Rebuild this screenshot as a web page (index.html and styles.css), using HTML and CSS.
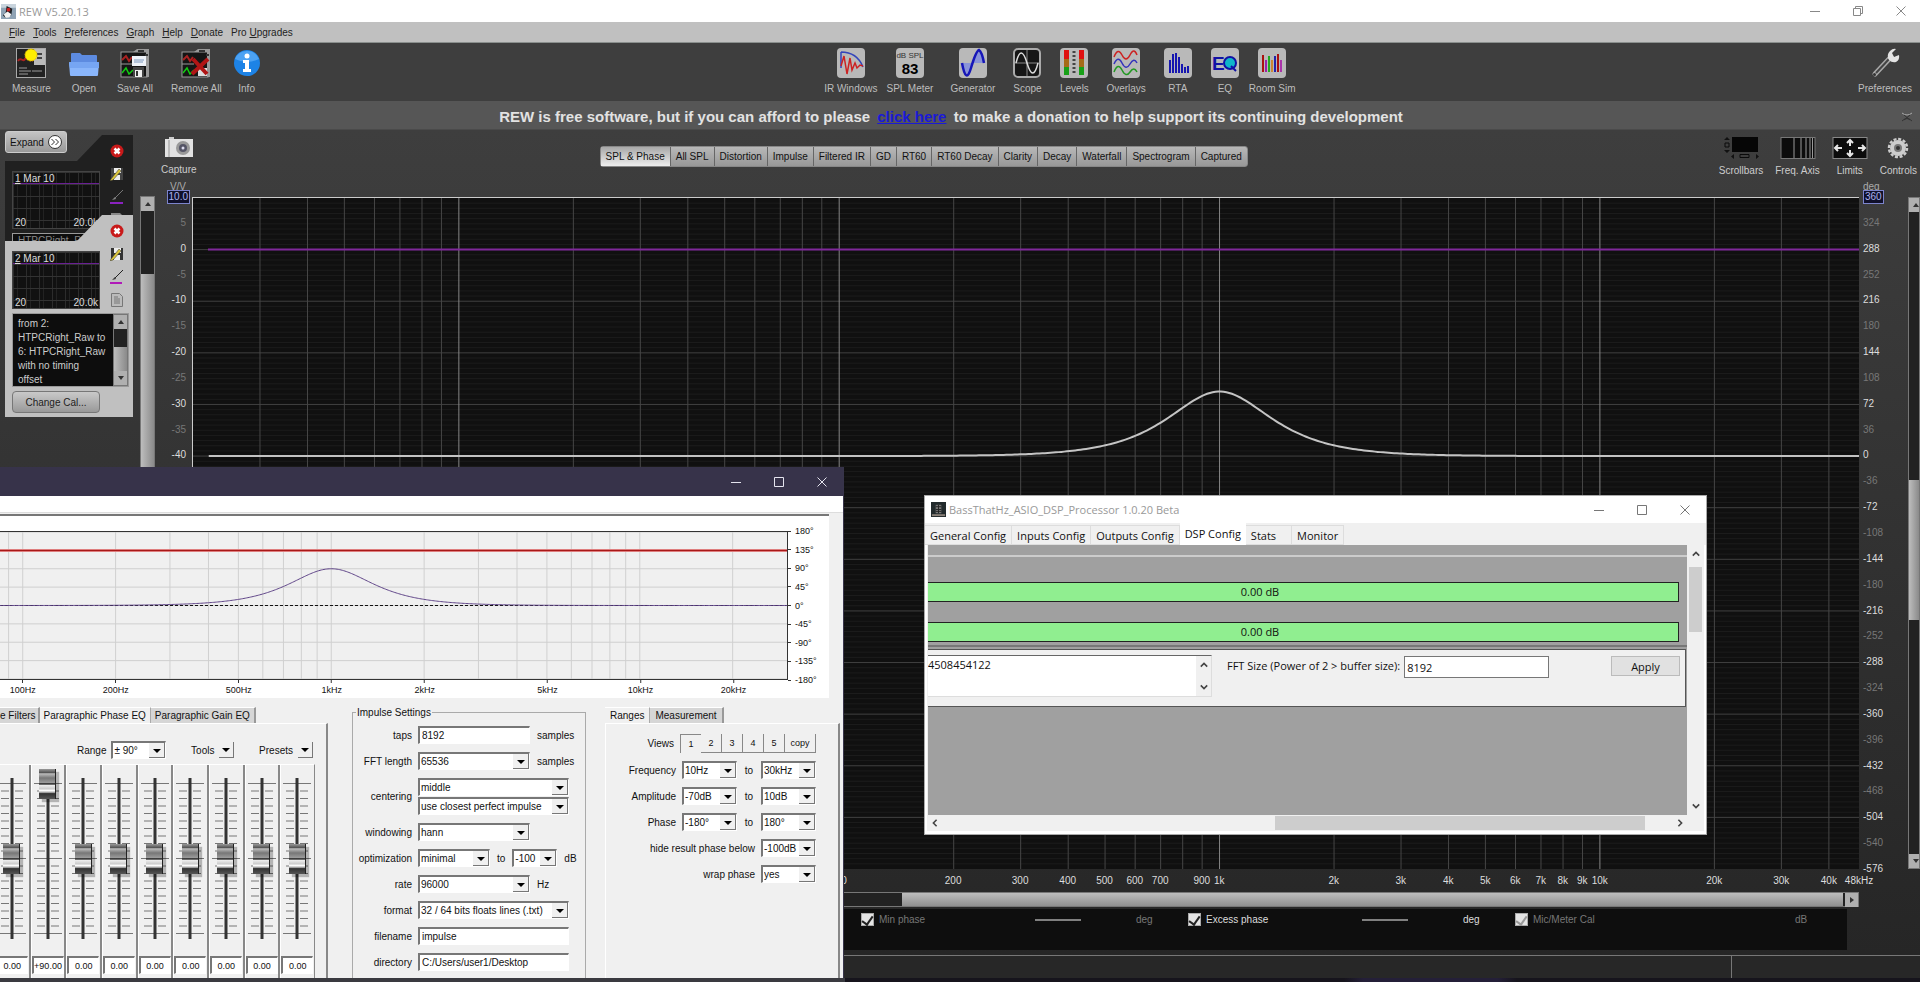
FILE: index.html
```html
<!DOCTYPE html>
<html lang="en">
<head>
    <meta charset="UTF-8">
    <meta name="viewport" content="width=device-width, initial-scale=1.0">
    <title>REW V5.20.13</title>
    <link rel="stylesheet" href="styles.css">
</head>
<body>
    <div class="rew">
        <header class="titlebar">
            <svg class="app-icon" viewBox="0 0 16 16"><rect width="16" height="16" fill="#8fa3b5"/><path d="M0 0h16v4H0z" fill="#c9d4dd"/><path d="M6 2l6 3-1 7-6 3-3-3 3-3z" fill="#1d2226"/><path d="M3 11l4-3 4 3-2 3-4 1z" fill="#f4f4f4"/><circle cx="8" cy="6" r="2" fill="#c22"/></svg>
            <span class="title">REW V5.20.13</span>
            <div class="win-buttons">
                <button aria-label="Minimize"><svg viewBox="0 0 10 10"><path d="M0 5.5h10"/></svg></button>
                <button aria-label="Restore"><svg viewBox="0 0 10 10"><path d="M.5 2.5h7v7h-7zM2.5 2.5v-2h7v7h-2"/></svg></button>
                <button aria-label="Close"><svg viewBox="0 0 10 10"><path d="M.5.5l9 9M9.5.5l-9 9"/></svg></button>
            </div>
        </header>

        <nav class="menubar">
            <a href="#"><u>F</u>ile</a>
            <a href="#"><u>T</u>ools</a>
            <a href="#"><u>P</u>references</a>
            <a href="#"><u>G</u>raph</a>
            <a href="#"><u>H</u>elp</a>
            <a href="#"><u>D</u>onate</a>
            <a href="#">Pro <u>U</u>pgrades</a>
        </nav>

        <div class="toolbar">
            <div class="tools">
                <button class="tool">
                    <svg viewBox="0 0 30 30"><rect x=".5" y=".5" width="29" height="29" fill="#222" stroke="#aaa"/><path d="M18 1h11v16H18z" fill="#bbb"/><path d="M2 13c3-5 5 2 7-2s4 3 8 1" stroke="#a22" stroke-width="2" fill="none"/><path d="M21 6h5M21 10h5" stroke="#444" stroke-width="2"/><path d="M3 20h8M3 23h12M3 26h9M16 23h10" stroke="#999"/><circle cx="15" cy="7" r="6" fill="#ffef00" stroke="#e6c000" stroke-dasharray="2 1"/></svg>
                    Measure
                </button>
                <button class="tool">
                    <svg viewBox="0 0 30 30"><path d="M2 6q0-1 1-1h8l2 2h14q1 0 1 1v8H2z" fill="#5d8be0"/><path d="M1 14h28q1 0 1 1l-1 12q0 1-1 1H2q-1 0-1-1L0 15q0-1 1-1z" fill="#8ab6fb"/><path d="M0 15q0-1 1-1h28q1 0 1 1v5H1z" fill="#76a5f2"/></svg>
                    Open
                </button>
                <button class="tool">
                    <svg viewBox="0 0 30 30"><rect x="1" y="4" width="26" height="25" fill="#151515" stroke="#999"/><path d="M13 4l4-3h12v28h-3V4z" fill="#999"/><path d="M18 3h6M25 7h3" stroke="#333" stroke-width="2"/><path d="M2 12l4-4 3 5 3-4" stroke="#a22" stroke-width="2" fill="none"/><path d="M2 25l4-5 3 6 4-4" stroke="#1c1" stroke-width="1.5" fill="none"/><path d="M1 16h12" stroke="#999"/><rect x="12" y="8" width="14" height="10" fill="#eef2f8"/><path d="M14 12h10M14 14h9" stroke="#7a96bb"/><path d="M13 19h11v10H13z" fill="#444"/><rect x="15" y="22" width="7" height="7" fill="#eee"/><rect x="16" y="23" width="2" height="5" fill="#333"/></svg>
                    Save All
                </button>
                <button class="tool">
                    <svg viewBox="0 0 30 30"><rect x="1" y="4" width="26" height="25" fill="#151515" stroke="#999"/><path d="M13 4l4-3h12v28h-3V4z" fill="#999"/><path d="M18 3h6M25 7h3" stroke="#333" stroke-width="2"/><path d="M17 20h9v8h-9z" fill="#ddd"/><path d="M2 12l4-4 3 5 3-4" stroke="#a22" stroke-width="2" fill="none"/><path d="M2 25l4-5 3 6 4-4" stroke="#1c1" stroke-width="1.5" fill="none"/><path d="M1 16h12" stroke="#999"/><path d="M12 11l14 15M27 11L11 26" stroke="#b01515" stroke-width="4"/></svg>
                    Remove All
                </button>
                <button class="tool tight">
                    <svg viewBox="0 0 30 30"><circle cx="15" cy="15" r="13" fill="#1d83e6"/><path d="M3 11a13 13 0 0 1 24 0q-12 6-24 0z" fill="#4ca2f3"/><circle cx="15" cy="8" r="2.5" fill="#fff"/><path d="M11 12h6v9h2v3h-8v-3h2v-6h-2z" fill="#fff"/></svg>
                    Info
                </button>
            </div>
            <div class="tools tools-graphs">
                <button class="tool">
                    <svg viewBox="0 0 30 30"><rect class="key" x="1" width="28" height="30" rx="4"/><path d="M5 4v16M5 4q16 0 22 15" stroke="#3344bb" stroke-width="1.5" fill="none"/><path d="M5 18l3-10 3 18 3-16 2 12 3-7 2 5 3-3 3 1" stroke="#c22" stroke-width="1.5" fill="none"/></svg>
                    IR Windows
                </button>
                <button class="tool tight">
                    <svg viewBox="0 0 30 30"><rect class="key" x="1" width="28" height="30" rx="4"/><text x="15" y="10" font-size="8" text-anchor="middle" fill="#333">dB SPL</text><text x="15" y="26" font-size="15" font-weight="bold" text-anchor="middle">83</text></svg>
                    SPL Meter
                </button>
                <button class="tool">
                    <svg viewBox="0 0 30 30"><rect class="key" x="1" width="28" height="30" rx="4"/><path d="M4 15q5 22 11 0t11 0z" fill="#8a94d8"/><path d="M4 15q4 22 9 5T21 2q3 2 5 13" stroke="#1616b8" stroke-width="2.5" fill="none"/></svg>
                    Generator
                </button>
                <button class="tool">
                    <svg viewBox="0 0 30 30"><rect x="2" y="1" width="26" height="28" rx="4" fill="#161616" stroke="#aaa" stroke-width="2"/><path d="M3 15h24M15 2v26" stroke="#888"/><path d="M4 15q5-20 11 0t11 0" stroke="#ddd" stroke-width="1.5" fill="none"/></svg>
                    Scope
                </button>
                <button class="tool">
                    <svg viewBox="0 0 30 30"><rect class="key" x="1" width="28" height="30" rx="4"/><path d="M5 2h5v9H5zM20 2h5v9h-5z" fill="#e01010"/><path d="M5 11h5v9H5zM20 11h5v9h-5z" fill="#a56b18"/><path d="M5 19h5v8H5zM20 19h5v8h-5z" fill="#18a018"/><path d="M15 3v24" stroke="#444" stroke-width="3" stroke-dasharray="2 2"/></svg>
                    Levels
                </button>
                <button class="tool">
                    <svg viewBox="0 0 30 30"><rect class="key" x="1" width="28" height="30" rx="4"/><g fill="none" stroke-width="1.5"><path d="M3 9q4-10 8-2t8 0 7 0" stroke="#c22"/><path d="M3 16q4-9 8-1t8 1 7-1" stroke="#33b"/><path d="M3 24q4-10 8-2t8 2 7 0" stroke="#292"/></g></svg>
                    Overlays
                </button>
                <button class="tool">
                    <svg viewBox="0 0 30 30"><rect class="key" x="1" width="28" height="30" rx="4"/><path d="M7 25V12M10 25V6M13 25V5M16 25V9M19 25v-9M22 25v-6M25 25v-7" stroke="#1616b0" stroke-width="2"/></svg>
                    RTA
                </button>
                <button class="tool">
                    <svg viewBox="0 0 30 30"><rect class="key" x="1" width="28" height="30" rx="4"/><text x="2" y="22" font-size="19" font-weight="bold" fill="#1111a5">E</text><circle cx="20" cy="15" r="6" fill="#0fb5c9" stroke="#1111a5" stroke-width="2"/><path d="M21 18l5 5" stroke="#1111a5" stroke-width="2"/></svg>
                    EQ
                </button>
                <button class="tool tight">
                    <svg viewBox="0 0 30 30"><rect class="key" x="1" width="28" height="30" rx="4"/><g stroke-width="2"><path d="M6 24V7" stroke="#a11"/><path d="M9 24V12" stroke="#92a"/><path d="M12 24V8" stroke="#2a2"/><path d="M15 24V12" stroke="#c83"/><path d="M18 24V8" stroke="#22a"/><path d="M21 24V6" stroke="#a11"/><path d="M24 24V12" stroke="#a3a"/></g></svg>
                    Room Sim
                </button>
            </div>
            <button class="tool">
                <svg viewBox="0 0 30 30"><path d="M5 26L21 9" stroke="#aaa" stroke-width="5" stroke-linecap="round"/><path d="M6 25L19 11" stroke="#444" stroke-width="2"/><path d="M19 12q-3-5 1-9 3-3 6-2l-4 4 2 4 5-2q1 5-3 7-4 1-7-2z" fill="#e4e4e4"/><circle cx="4.5" cy="26.5" r="1.5" fill="#333"/></svg>
                Preferences
            </button>
        </div>

        <div class="banner">
            <p>REW is free software, but if you can afford to please <a href="#">click here</a> to make a donation to help support its continuing development</p>
            <button class="banner-close" aria-label="Close"><svg viewBox="0 0 10 10"><path d="M0 1q5 4 10 0" stroke="#aaa"/><path d="M0 9q5-5 10 0M2 3l6 5M8 3L2 8"/></svg></button>
        </div>

        <main class="workspace">
            <aside class="measurements">
                <button class="expand">Expand <svg viewBox="0 0 14 14"><circle cx="7" cy="7" r="6.5"/><path d="M3.5 4l3 3-3 3M7.5 4l3 3-3 3"/></svg></button>
                <article class="card card-dark">
                    <div class="card-main">
                        <div class="thumb"><b><u>1</u> Mar 10</b><span>20</span><span>20.0k</span></div>
                        <p class="notes notes-cut">HTPCRight_R</p>
                    </div>
                    <div class="card-tools">
                        <svg viewBox="0 0 14 14"><circle cx="7" cy="7" r="6.5" fill="#c81a1a"/><path d="M4.5 4.5l5 5M9.5 4.5l-5 5" stroke="#fff" stroke-width="2.5"/></svg>
                        <svg viewBox="0 0 14 14"><path d="M1 1h12v12H1z" fill="#444"/><path d="M4 1h7v5H4zM4 8h6v5H4z" fill="#eee"/><path d="M1 12L9 2l2 2-8 9-3 1z" fill="#dcc53a" stroke="#333" stroke-width=".5"/></svg>
                        <svg viewBox="0 0 14 14"><path d="M4 9l9-9" stroke="#777"/><path d="M2 10l3-3 1 2z" fill="#888"/><path d="M0 13h13" stroke="#8a22c0" stroke-width="2"/></svg>
                        <svg viewBox="0 0 14 14"><path d="M1 0h9l3 3v11H1z" fill="#888"/></svg>
                    </div>
                </article>
                <article class="card card-light">
                    <div class="card-main">
                        <div class="thumb"><b><u>2</u> Mar 10</b><span>20</span><span>20.0k</span></div>
                        <div class="notes">
                            <p>from 2:<br>HTPCRight_Raw to<br>6: HTPCRight_Raw<br>with no timing<br>offset</p>
                            <div class="scroll scroll-v"><button aria-label="Up"></button><i class="trough trough-s"></i><i class="grip"></i><button class="down" aria-label="Down"></button></div>
                        </div>
                        <button class="change-cal">Change Cal...</button>
                    </div>
                    <div class="card-tools">
                        <svg viewBox="0 0 14 14"><circle cx="7" cy="7" r="6.5" fill="#c81a1a"/><path d="M4.5 4.5l5 5M9.5 4.5l-5 5" stroke="#fff" stroke-width="2.5"/></svg>
                        <svg viewBox="0 0 14 14"><path d="M1 1h12v12H1z" fill="#333"/><path d="M4 1h7v5H4zM4 8h6v5H4z" fill="#eee"/><path d="M1 12L9 2l2 2-8 9-3 1z" fill="#dcc53a" stroke="#333" stroke-width=".5"/></svg>
                        <svg viewBox="0 0 14 14"><path d="M4 9l9-9" stroke="#222"/><path d="M2 10l3-3 1 2z" fill="#333"/><path d="M0 13h12" stroke="#b01ab8" stroke-width="2"/></svg>
                        <svg viewBox="0 0 14 14"><path d="M1.5.5h8l3 3v10h-11z" fill="#bbb" stroke="#777"/><path d="M4 4h4M4 6h6M4 8h6M4 10h6" stroke="#777"/></svg>
                    </div>
                </article>
            </aside>
            <div class="scroll scroll-v side-scroll"><button aria-label="Up"></button><i class="trough trough-m"></i><i class="grip"></i></div>

            <section class="graph">
                <div class="graph-head">
                    <button class="gbtn">
                        <svg viewBox="0 0 30 22"><rect x="1" y="3" width="28" height="18" fill="#e2e2e2"/><path d="M5 3V1h5v2" fill="#ccc"/><path d="M5 4v17" stroke="#bbb" stroke-width="2"/><circle cx="19" cy="12" r="7" fill="#999"/><circle cx="19" cy="12" r="4" fill="#556"/><circle cx="19" cy="12" r="1.5" fill="#dde"/></svg>
                        Capture
                    </button>
                    <div class="graph-tabs">
                        <button class="on">SPL &amp; Phase</button><button>All SPL</button><button>Distortion</button><button>Impulse</button><button>Filtered IR</button><button>GD</button><button>RT60</button><button>RT60 Decay</button><button>Clarity</button><button>Decay</button><button>Waterfall</button><button>Spectrogram</button><button>Captured</button>
                    </div>
                    <div class="graph-opts">
                        <button class="gbtn">
                            <svg viewBox="0 0 36 22"><rect x="9" y="0" width="26" height="15" fill="#060606"/><g fill="#111"><path d="M1 3l3-3 3 3zM1 13l3 3 3-3zM11 17v5l-3-2.5zM33 17v5l3-2.5z"/></g><path d="M2 6h4v4H2zM17 17.5h9v3h-9z" fill="none" stroke="#0a0a0a"/></svg>
                            Scrollbars
                        </button>
                        <button class="gbtn">
                            <svg viewBox="0 0 36 22"><rect x="1" y=".5" width="34" height="21" fill="#0c0c0c" stroke="#777"/><path d="M14 1v20M21 1v20M26 1v20M30 1v20M32.5 1v20" stroke="#999"/></svg>
                            Freq. Axis
                        </button>
                        <button class="gbtn">
                            <svg viewBox="0 0 36 22"><rect x="1" y=".5" width="34" height="21" fill="#0c0c0c" stroke="#888"/><path d="M18 9V3M15 6l3-3 3 3M18 13v6M15 16l3 3 3-3M10 11H3M6 8l-3 3 3 3M26 11h7M30 8l3 3-3 3" fill="none" stroke="#e6e6e6" stroke-width="2"/></svg>
                            Limits
                        </button>
                        <button class="gbtn">
                            <svg viewBox="0 0 36 22"><circle cx="18" cy="11" r="9" fill="none" stroke="#ccc" stroke-width="2.5" stroke-dasharray="3 1.7"/><circle cx="18" cy="11" r="8" fill="#ccc"/><circle cx="18" cy="11" r="4" fill="#777"/><circle cx="18" cy="11" r="2" fill="#333"/></svg>
                            Controls
                        </button>
                    </div>
                </div>
                <div class="graph-body">
                    <div class="axis axis-left" id="axisDb"><em>V/V</em></div>
                    <svg class="plot" id="plot" role="img" aria-label="Phase against frequency"></svg>
                    <div class="axis axis-right" id="axisDeg"><em>deg</em></div>
                    <div class="scroll scroll-v right-scroll"><button aria-label="Up"></button><i class="trough"></i><i class="grip"></i><i class="trough"></i><button class="down" aria-label="Down"></button></div>
                    <div class="axis-freq" id="axisFreq"></div>
                    <div class="scroll scroll-h"><i class="trough"></i><i class="grip"></i><button class="right" aria-label="Right"></button></div>
                </div>
                <div class="legend">
                    <div class="trace dim"><label><input type="checkbox" checked>Min phase</label><hr><span>deg</span></div>
                    <div class="trace"><label><input type="checkbox" checked>Excess phase</label><hr><span>deg</span></div>
                    <div class="trace dim no-line"><label><input type="checkbox" checked disabled>Mic/Meter Cal</label><span>dB</span></div>
                </div>
            </section>
        </main>
        <footer class="statusbar"><span></span><span></span></footer>
        <div class="taskbar"></div>
    </div>

    <!-- rePhase -->
    <section class="window rephase">
        <header class="titlebar">
            <div class="win-buttons">
                <button aria-label="Minimize"><svg viewBox="0 0 10 10"><path d="M0 5.5h10"/></svg></button>
                <button aria-label="Maximize"><svg viewBox="0 0 10 10"><path d="M.5.5h9v9h-9z"/></svg></button>
                <button aria-label="Close"><svg viewBox="0 0 10 10"><path d="M.5.5l9 9M9.5.5l-9 9"/></svg></button>
            </div>
        </header>
        <div class="strip"></div>
        <div class="response">
            <svg class="mini" id="mini" role="img" aria-label="Phase response"></svg>
            <div class="mini-deg" id="miniDeg"></div>
            <div class="mini-hz" id="miniHz"></div>
        </div>
        <div class="panels">
            <div class="eq">
                <div class="tabs"><button class="cut">e Filters</button><button class="on">Paragraphic Phase EQ</button><button>Paragraphic Gain EQ</button></div>
                <div class="pane">
                    <div class="eq-options">
                        <label for="range">Range</label><span class="combo w54"><select id="range"><option>± 90°</option></select></span>
                        <span class="drop"><label for="tools">Tools</label><button id="tools" aria-label="Tools"></button></span>
                        <span class="drop"><label for="presets">Presets</label><button id="presets" aria-label="Presets"></button></span>
                    </div>
                    <div class="sliders" id="sliders"></div>
                </div>
            </div>

            <fieldset class="impulse">
                <legend>Impulse Settings</legend>
                <label for="taps">taps</label><div><input id="taps" class="w112" value="8192"><span>samples</span></div>
                <label for="fft">FFT length</label><div><span class="combo w112"><select id="fft"><option>65536</option></select></span><span>samples</span></div>
                <label for="centering">centering</label>
                <div class="stack"><span class="combo w151"><select id="centering"><option>middle</option></select></span><span class="combo w151"><select aria-label="centering mode"><option>use closest perfect impulse</option></select></span></div>
                <label for="windowing">windowing</label><div><span class="combo w112"><select id="windowing"><option>hann</option></select></span></div>
                <label for="optim">optimization</label><div><span class="combo w72"><select id="optim"><option>minimal</option></select></span><span>to</span><span class="combo w45"><select aria-label="optimization level"><option>-100</option></select></span><span>dB</span></div>
                <label for="rate">rate</label><div><span class="combo w112"><select id="rate"><option>96000</option></select></span><span>Hz</span></div>
                <label for="format">format</label><div><span class="combo w151"><select id="format"><option>32 / 64 bits floats lines (.txt)</option></select></span></div>
                <label for="filename">filename</label><div><input id="filename" class="w151" value="impulse"></div>
                <label for="directory">directory</label><div><input id="directory" class="w151" value="C:/Users/user1/Desktop"></div>
            </fieldset>

            <div class="ranges">
                <div class="tabs"><button class="on">Ranges</button><button>Measurement</button></div>
                <div class="pane">
                    <div class="row row-views"><span>Views</span><div class="views"><button class="on">1</button><button>2</button><button>3</button><button>4</button><button>5</button><button>copy</button></div></div>
                    <div class="row"><label for="f1">Frequency</label><span class="combo w54"><select id="f1"><option>10Hz</option></select></span><label for="f2">to</label><span class="combo w54"><select id="f2"><option>30kHz</option></select></span></div>
                    <div class="row"><label for="a1">Amplitude</label><span class="combo w54"><select id="a1"><option>-70dB</option></select></span><label for="a2">to</label><span class="combo w54"><select id="a2"><option>10dB</option></select></span></div>
                    <div class="row"><label for="p1">Phase</label><span class="combo w54"><select id="p1"><option>-180°</option></select></span><label for="p2">to</label><span class="combo w54"><select id="p2"><option>180°</option></select></span></div>
                    <div class="row"><label for="hide">hide result phase below</label><span class="combo w54"><select id="hide"><option>-100dB</option></select></span></div>
                    <div class="row"><label for="wrap">wrap phase</label><span class="combo w54"><select id="wrap"><option>yes</option></select></span></div>
                </div>
            </div>
        </div>
    </section>

    <!-- DSP processor -->
    <section class="window dsp">
        <header class="titlebar">
            <svg class="app-icon" viewBox="0 0 16 16"><rect width="16" height="16" fill="#222a2c"/><path d="M5 3h6v9H5z" fill="#777"/><path d="M5 5h6M5 8h6M5 10h6M8 3v9" stroke="#222"/><path d="M1 14h14" stroke="#8a8078" stroke-width="2"/></svg>
            <span class="title">BassThatHz_ASIO_DSP_Processor 1.0.20 Beta</span>
            <div class="win-buttons">
                <button aria-label="Minimize"><svg viewBox="0 0 10 10"><path d="M0 5.5h10"/></svg></button>
                <button aria-label="Maximize"><svg viewBox="0 0 10 10"><path d="M.5.5h9v9h-9z"/></svg></button>
                <button aria-label="Close"><svg viewBox="0 0 10 10"><path d="M.5.5l9 9M9.5.5l-9 9"/></svg></button>
            </div>
        </header>
        <div class="dsp-tabs"><button>General Config</button><button>Inputs Config</button><button>Outputs Config</button><button class="on">DSP Config</button><button class="wide">Stats</button><button>Monitor</button></div>
        <div class="dsp-body">
            <div class="dsp-view">
                <div class="meters">
                    <div class="meter">0.00 dB</div>
                    <div class="meter">0.00 dB</div>
                </div>
                <div class="filter">
                    <div class="memo"><textarea aria-label="Coefficients" rows="2">4508454122</textarea><div class="flat-v"><svg viewBox="0 0 10 6"><path d="M1 5l4-4 4 4"/></svg><svg viewBox="0 0 10 6"><path d="M1 1l4 4 4-4"/></svg></div></div>
                    <label for="size">FFT Size (Power of 2 &gt; buffer size):</label>
                    <input id="size" value="8192">
                    <button class="apply">Apply</button>
                </div>
            </div>
            <div class="flat-v"><svg viewBox="0 0 10 6"><path d="M1 5l4-4 4 4"/></svg><i></i><svg viewBox="0 0 10 6"><path d="M1 1l4 4 4-4"/></svg></div>
            <div class="flat-h"><svg viewBox="0 0 6 10"><path d="M5 1L1 5l4 4"/></svg><i></i><svg viewBox="0 0 6 10"><path d="M1 1l4 4-4 4"/></svg></div>
        </div>
    </section>

    <script src="script.js"></script>
</body>
</html>
```
FILE: styles.css
```css
* {
    box-sizing: border-box;
    margin: 0;
    padding: 0;
}

body {
    height: 100vh;
    overflow: hidden;
    background: #1a1820;
    color: #ccc;
    font: 10px "Liberation Sans", Arial, sans-serif;
}

button, input, select, textarea {
    font: inherit;
    color: inherit;
    border: 0;
    border-radius: 0;
    background: none;
}

a {
    color: inherit;
    text-decoration: none;
}

svg {
    display: block;
}

/* ---------- shared window parts ---------- */
.titlebar {
    display: flex;
    align-items: center;
    gap: 3px;
    background: #fff;
    color: #999;
    font-family: "Open Sans", "Noto Sans", sans-serif;
    font-size: 11px;
}

.app-icon {
    width: 15px;
    height: 15px;
}

.win-buttons {
    display: flex;
    margin-left: auto;
}

.win-buttons button {
    display: grid;
    place-items: center;
    width: 43px;
    height: 20px;
}

.win-buttons svg {
    width: 10px;
    height: 10px;
    fill: none;
    stroke: #888;
}

.rew .win-buttons, .dsp .win-buttons {
    margin-right: -2px;
}

/* ---------- REW ---------- */
.rew {
    display: flex;
    flex-direction: column;
    height: 100%;
    overflow: hidden;
}

.rew > .titlebar {
    height: 22px;
    padding-left: 1px;
}

.menubar {
    display: flex;
    align-items: center;
    gap: 8px;
    height: 21px;
    padding-left: 9px;
    background: #c0c0c0;
    border-bottom: 1px solid #8a8f8d;
    color: #222;
}

.toolbar {
    display: flex;
    justify-content: space-between;
    height: 58px;
    padding: 5px 8px 0 12px;
    background: #3e3e3e;
}

.tools {
    display: flex;
    gap: 18px;
}

.tools-graphs {
    gap: 17px;
}

.tool {
    display: flex;
    flex-direction: column;
    align-items: center;
    gap: 5px;
    height: 46px;
    color: #bdbdbd;
    white-space: nowrap;
}

.tool.tight {
    margin-left: -8px;
}

.tool svg {
    width: 30px;
    height: 30px;
}

.tool .key {
    fill: #b9b9b9;
}

.banner {
    display: flex;
    align-items: center;
    height: 29px;
    padding-top: 3px;
    background: #565656;
    border-bottom: 1px solid #4a4a4a;
    color: #e2e2e2;
    font-size: 15px;
    font-weight: bold;
}

.banner p {
    flex: 1;
    text-align: center;
}

.banner a {
    margin: 0 3px;
    color: #1a1ad6;
    text-decoration: underline;
}

.banner-close {
    width: 18px;
}

.banner-close svg {
    width: 10px;
    height: 10px;
    fill: none;
    stroke: #333;
}

.workspace {
    flex: 1;
    display: flex;
    min-height: 0;
    background: linear-gradient(#3e3e3e, #343434 40%, #262626);
}

/* measurement list */
.measurements {
    width: 140px;
    padding: 1px 6px 0 5px;
}

.expand {
    position: relative;
    z-index: 1;
    display: flex;
    align-items: center;
    gap: 4px;
    height: 22px;
    padding: 0 4px;
    border: 1px solid #ccc;
    border-radius: 3px;
    background: linear-gradient(#c4c4c4, #999);
    color: #111;
}

.expand svg {
    width: 14px;
    height: 14px;
    fill: #fff;
    stroke: #333;
}

.card {
    display: flex;
    gap: 10px;
    width: 128px;
    clip-path: polygon(97px 0, 100% 0, 100% 100%, 0 100%, 0 26px, 72px 26px);
}

.card-dark {
    height: 106px;
    margin-top: -18px;
    overflow: hidden;
    background: #202020;
}

.card-light {
    height: 202px;
    margin-top: -26px;
    background: #c0c0c0;
}

.card-main {
    display: flex;
    flex-direction: column;
    gap: 4px;
    width: 88px;
    margin: 36px 0 0 7px;
}

.thumb {
    display: flex;
    flex-wrap: wrap;
    flex-shrink: 0;
    justify-content: space-between;
    align-content: space-between;
    height: 58px;
    padding: 1px 1px 0 2px;
    border: 1px solid #444;
    background:
        linear-gradient(#6a2094, #6a2094) 0 11px / 100% 1px no-repeat,
        repeating-linear-gradient(#333 0 1px, transparent 1px 12px),
        repeating-linear-gradient(90deg, #2c2c2c 0 1px, transparent 1px 4px, #222 4px 5px, transparent 5px 13px),
        #111;
    color: #ddd;
}

.thumb b {
    width: 100%;
    font-weight: normal;
}

.notes {
    display: flex;
    flex-shrink: 0;
    width: 117px;
    height: 74px;
    border: 1px solid #999;
    background: #0d0d0d;
    color: #ccc;
    line-height: 14px;
}

.notes p {
    flex: 1;
    padding: 3px 0 0 5px;
    white-space: nowrap;
}

.notes-cut {
    height: 30px;
    padding-left: 5px;
    color: #888;
}

.change-cal {
    width: 88px;
    height: 22px;
    border: 1px solid #777;
    border-radius: 4px;
    background: linear-gradient(#c9c9c9, #999);
    color: #222;
}

.card-tools {
    display: flex;
    flex-direction: column;
    gap: 9px;
    margin-top: 9px;
}

.card-tools svg {
    width: 14px;
    height: 14px;
}

/* metal scrollbars */
.scroll {
    display: flex;
    border: 1px solid #777;
    background: #222;
}

.scroll-v {
    flex-direction: column;
    width: 15px;
}

.scroll button {
    flex: none;
    display: grid;
    place-items: center;
    width: 13px;
    height: 14px;
    background: #b0b0b0;
}

.scroll button::before {
    content: "";
    border: 3px solid transparent;
    border-top: 0;
    border-bottom: 4px solid #333;
}

.scroll button.down::before {
    transform: rotate(180deg);
}

.scroll button.right::before {
    transform: rotate(90deg);
}

.grip {
    flex: 1;
    background: linear-gradient(90deg, #bdbdbd, #8a8a8a);
}

.trough {
    flex: none;
}

.trough-s {
    height: 18px;
}

.trough-m {
    height: 63px;
}

.side-scroll {
    margin-top: 66px;
}

/* graph */
.graph {
    flex: 1;
    display: flex;
    flex-direction: column;
    min-width: 0;
}

.graph-head {
    display: flex;
    justify-content: space-between;
    height: 67px;
    padding: 6px 3px 0 6px;
}

.gbtn {
    display: flex;
    flex-direction: column;
    align-items: center;
    gap: 6px;
    height: 40px;
    color: #ccc;
}

.gbtn svg {
    height: 22px;
}

.graph-tabs {
    display: flex;
    height: 21px;
    margin: 10px 68px 0 0;
    border: 1px solid #888;
    border-radius: 3px;
    background: linear-gradient(#b8b8b8, #989898);
    color: #111;
}

.graph-tabs button {
    padding: 0 5px;
    border-left: 1px solid #666;
}

.graph-tabs .on {
    border-left: 0;
    background: linear-gradient(#a8a8a8, #eee);
}

.graph-opts {
    display: flex;
    gap: 12px;
    padding-top: 1px;
}

.graph-body {
    flex: 1;
    display: grid;
    grid-template: 1fr 23px 15px / 37px 1fr 49px 12px;
    min-height: 0;
}

.axis {
    position: relative;
    color: #ddd;
}

.axis em, .axis span {
    position: absolute;
    line-height: 12px;
    font-style: normal;
    transform: translateY(-50%);
}

.axis em {
    top: -10px;
    color: #aaa;
}

.axis-left em, .axis-left span {
    right: 6px;
}

.axis-right em, .axis-right span {
    left: 4px;
}

.axis .minor {
    color: #777;
}

.axis .limit {
    padding: 0 1px;
    border: 1px solid #7c84cc;
    background: #10102a;
    color: #aab2f0;
}

.axis-left .limit {
    right: 2px;
}

.plot {
    width: 100%;
    height: 100%;
    background: #101010;
    border-top: 1px solid #ccc;
    border-left: 1px solid #ccc;
}

.right-scroll {
    width: 12px;
    overflow: hidden;
}

.right-scroll .trough {
    flex: 269 0 0;
}

.right-scroll .grip {
    flex: 140 0 0;
}

.right-scroll .grip + .trough {
    flex-grow: 235;
}

.axis-freq {
    grid-column: 2;
    position: relative;
    color: #ddd;
}

.axis-freq span {
    position: absolute;
    top: 6px;
    transform: translateX(-50%);
}

.scroll-h {
    grid-area: 3 / 2;
}

.scroll-h .trough {
    flex: 709 0 0;
}

.scroll-h .grip {
    flex: 940 0 0;
    border-right: 2px solid #222;
    background: linear-gradient(#bdbdbd, #8f8f8f);
}

.legend {
    display: flex;
    justify-content: flex-end;
    height: 41px;
    margin: 2px 73px 5px 0;
    padding: 3px 5px 0 0;
    background: #0e0e0e;
}

.trace {
    display: grid;
    grid-template-columns: 174px 46px 1fr;
    align-items: center;
    width: 327px;
    height: 15px;
    color: #ddd;
}

.trace.dim {
    color: #777;
}

.trace label {
    display: flex;
    align-items: center;
    gap: 5px;
}

.trace input {
    appearance: none;
    display: grid;
    place-items: center;
    width: 13px;
    height: 13px;
    padding: 0;
    border: 1px solid #aaa;
    background: #e4e4e4;
}

.trace input::before {
    content: "";
    width: 5px;
    height: 9px;
    border: solid #222;
    border-width: 0 2px 2px 0;
    transform: rotate(35deg);
}

.trace input:disabled::before {
    border-color: #999;
}

.trace hr {
    border: 0;
    border-top: 2px solid currentColor;
}

.trace span {
    padding-left: 55px;
}

.no-line {
    grid-template-columns: 280px 1fr;
}

.no-line span {
    padding: 0;
}

.statusbar {
    display: flex;
    height: 23px;
    border-top: 1px solid #777;
    background: #272727;
}

.statusbar span {
    flex: 1732 0 0;
}

.statusbar span + span {
    flex-grow: 188;
    border-left: 1px solid #777;
}

.taskbar {
    height: 4px;
    background: linear-gradient(90deg, #3a3a40 44%, #16141c 44% 70%, #241f38 71% 78%, #16141c 79%);
}

/* ---------- floating windows ---------- */
.window {
    position: absolute;
    display: flex;
    flex-direction: column;
    color: #111;
}

/* rePhase */
.rephase {
    left: 0;
    bottom: 4px;
    width: 844px;
    height: 511px;
    background: #f0f0f0;
    border-right: 1px solid #37344a;
    overflow: hidden;
}

.rephase .titlebar {
    flex: none;
    height: 29px;
    background: #37334a;
}

.rephase .win-buttons svg {
    stroke: #e4e4ee;
}

.strip {
    flex: none;
    height: 17px;
    background: #fff;
    border-bottom: 1px solid #ddd;
}

.response {
    display: grid;
    grid-template: 149px 18px / 1fr 41px;
    margin: 1px 14px 0 0;
    padding-top: 15px;
    border-top: 2px solid #777;
    background: #fff;
    font-size: 9px;
}

.mini {
    width: 100%;
    height: 100%;
    background: #f0f0f0;
    border: solid #333;
    border-width: 1px 1px 1px 0;
}

.mini-deg, .mini-hz {
    position: relative;
}

.mini-deg span {
    position: absolute;
    left: 0;
    display: flex;
    align-items: center;
    gap: 4px;
    line-height: 10px;
    transform: translateY(-50%);
}

.mini-deg span::before {
    content: "";
    width: 3px;
    height: 1px;
    background: #333;
}

.mini-hz span {
    position: absolute;
    top: 0;
    transform: translateX(-50%);
}

.mini-hz span::before {
    content: "";
    display: block;
    width: 1px;
    height: 3px;
    margin: 0 auto 2px;
    background: #333;
}

.panels {
    flex: 1;
    display: flex;
    align-items: stretch;
    min-height: 0;
    padding-top: 9px;
}

.tabs {
    display: flex;
    height: 17px;
}

.tabs button {
    padding: 0 5px;
    background: #d6d6d6;
    border-top: 1px solid #fff;
    border-right: 2px solid #999;
    white-space: nowrap;
}

.eq .tabs button {
    padding: 0 4px;
}

.eq .tabs .cut {
    padding: 0 2px 0 0;
}

.tabs .on {
    background: #f0f0f0;
    border-right: 1px solid #aaa;
}

.pane {
    flex: 1;
    border-top: 1px solid #fff;
    border-right: 2px solid #888;
}

.eq {
    display: flex;
    flex-direction: column;
    width: 328px;
}

.eq-options {
    display: flex;
    align-items: center;
    gap: 5px;
    height: 40px;
    padding: 12px 13px 0 77px;
}

.drop {
    display: flex;
    align-items: center;
    gap: 5px;
    margin-left: auto;
}

.drop button {
    display: grid;
    place-items: center;
    width: 15px;
    height: 16px;
    border: solid #777;
    border-width: 0 1px 1px 0;
}

.drop button::before, .combo::after {
    content: "";
    border: 4px solid transparent;
    border-top-color: #000;
    border-bottom: 0;
}

input, .combo {
    height: 18px;
    border: 1px solid #fff;
    border-top: 2px solid #777;
    border-left: 2px solid #777;
    background: #fff;
}

input {
    padding-left: 2px;
}

.combo {
    position: relative;
    display: inline-flex;
}

.combo select {
    appearance: none;
    width: 100%;
    padding-left: 1px;
    outline: 0;
}

.combo::before {
    content: "";
    position: absolute;
    top: 0;
    right: 0;
    width: 15px;
    height: 14px;
    border: solid #777;
    border-width: 0 1px 1px 0;
    background: #f0f0f0;
    pointer-events: none;
}

.combo::after {
    position: absolute;
    top: 6px;
    right: 4px;
    pointer-events: none;
}

.w45 { width: 45px; }
.w54 { width: 55px; }
.w72 { width: 72px; }
.w112 { width: 112px; }
.w151 { width: 151px; }

.sliders {
    display: flex;
    height: 214px;
    margin: 0 11px 0 -7px;
    border-top: 1px solid #fff;
    border-right: 1px solid #888;
}

.slider {
    position: relative;
    flex: 1 0 0;
    display: flex;
    flex-direction: column;
    align-items: center;
    gap: 7px;
    border-left: 2px solid #888;
    box-shadow: inset 1px 0 #fff;
}

.slider svg {
    position: absolute;
    top: 3px;
    width: 28px;
    height: 180px;
}

.slider input[type="range"] {
    appearance: none;
    writing-mode: vertical-lr;
    direction: rtl;
    position: relative;
    width: 20px;
    height: 180px;
    margin-top: 4px;
    padding: 0;
    border: 0;
    background: none;
}

.slider input[type="range"]::-webkit-slider-thumb {
    appearance: none;
    width: 17px;
    height: 30px;
    border-right: 1px solid #222;
    background: linear-gradient(#999, #555 12%, #bbb 16%, #777 30%, #999 45%, #111 50%, #eee 54%, #ccc 66%, #fff 72%, #aaa 78%, #333 82%, #555);
    box-shadow: 3px 3px 1px rgba(0, 0, 0, 0.25);
}

.slider .value {
    width: 32px;
    padding: 0;
    font-size: 9px;
    text-align: center;
}

.impulse {
    display: grid;
    grid-template-columns: 56px 1fr;
    gap: 8px 6px;
    align-content: start;
    width: 234px;
    margin-left: 24px;
    padding: 8px 0 0 3px;
    border: 1px solid #aaa;
    border-bottom: 0;
}

.impulse legend {
    padding: 0 1px;
}

.impulse > label {
    display: grid;
    place-items: center end;
}

.impulse > div {
    display: flex;
    align-items: center;
    gap: 7px;
}

.impulse > .stack {
    flex-direction: column;
    align-items: flex-start;
    gap: 1px;
}

.ranges {
    display: flex;
    flex-direction: column;
    width: 235px;
    margin: 0 0 0 19px;
}

.ranges .tabs {
    height: 16px;
}

.ranges .pane {
    display: flex;
    flex-direction: column;
    gap: 8px;
    padding: 9px 22px 0 0;
    border-left: 1px solid #fff;
}

.row {
    display: flex;
    align-items: center;
    justify-content: flex-end;
    gap: 6px;
    height: 18px;
}

.row-views {
    height: 20px;
}

.row .combo + label {
    width: 12px;
    text-align: center;
}

.views {
    display: flex;
}

.views button {
    width: 21px;
    height: 19px;
    border: solid #888;
    border-width: 0 1px 1px 0;
    font-size: 9px;
}

.views .on {
    border-width: 1px 0 0 1px;
}

.views button:last-child {
    width: 31px;
}

/* DSP processor */
.dsp {
    left: 924px;
    top: 495px;
    width: 783px;
    height: 340px;
    padding: 0 2px 3px;
    border: 1px solid #aaa;
    background: #fff;
    font-family: "Open Sans", "Noto Sans", sans-serif;
    font-size: 11px;
}

.dsp .titlebar {
    flex: none;
    height: 27px;
    padding-left: 4px;
}

.dsp .win-buttons svg {
    stroke: #777;
}

.dsp-tabs {
    display: flex;
    align-items: flex-end;
    height: 22px;
    margin: 0 -2px;
    background: #f0f0f0;
}

.dsp-tabs button {
    height: 20px;
    padding: 0 5px;
    border: solid #ddd;
    border-width: 1px 1px 1px 0;
    white-space: nowrap;
}

.dsp-tabs .on {
    height: 22px;
    padding-bottom: 1px;
    border: 0;
    background: #fff;
}

.dsp-tabs .wide {
    padding-right: 15px;
}

.dsp-body {
    flex: 1;
    display: grid;
    grid-template: 1fr 16px / 1fr 17px;
    padding: 0 0 0 1px;
    background: #f0f0f0;
}

.dsp-view {
    background: #a0a0a0;
}

.meters {
    display: flex;
    flex-direction: column;
    gap: 20px;
    margin-top: 10px;
    padding: 25px 8px 3px 0;
    border-top: 2px solid #ccc;
    border-bottom: 2px solid #777;
}

.meter {
    height: 20px;
    padding-right: 86px;
    border: 1px solid #222;
    border-left: 0;
    background: #90ee90;
    line-height: 17px;
    text-align: center;
}

.filter {
    display: flex;
    align-items: flex-start;
    height: 58px;
    margin: 2px 1px 0 0;
    padding: 5px 5px 0 0;
    border: 1px solid #555;
    border-left: 0;
    background: #f0f0f0;
}

.memo {
    display: flex;
    width: 284px;
    height: 42px;
    border: 1px solid #ddd;
    border-top: 1px solid #666;
    border-left: 0;
    background: #fff;
}

.memo textarea {
    flex: 1;
    padding-top: 1px;
    resize: none;
    overflow: hidden;
    outline: 0;
}

.filter label {
    margin: 3px 4px 0 15px;
    white-space: nowrap;
}

.filter input {
    flex: 0 0 145px;
    height: 22px;
    margin-top: 1px;
    border: 1px solid #777;
}

.apply {
    width: 69px;
    height: 20px;
    margin: 1px 0 0 auto;
    border: 1px solid #bbb;
    background: #e1e1e1;
}

.flat-v, .flat-h {
    display: flex;
    align-items: center;
    justify-content: space-between;
    background: #f0f0f0;
}

.flat-v {
    flex-direction: column;
    min-width: 15px;
    padding: 6px 0;
}

.flat-v svg {
    width: 8px;
    height: 6px;
}

.flat-h svg {
    width: 6px;
    height: 8px;
}

.flat-v svg, .flat-h svg {
    fill: none;
    stroke: #444;
    stroke-width: 2;
}

.flat-v i {
    width: 13px;
    height: 65px;
    margin: 10px 0 auto;
    background: #cdcdcd;
}

.flat-h {
    padding: 0 4px;
}

.flat-h i {
    width: 370px;
    height: 14px;
    margin: 0 32px 0 auto;
    background: #cdcdcd;
}
```
FILE: script.js
```js
const NS = 'http://www.w3.org/2000/svg';

// log position of a frequency between lo and hi, in percent
const pos = (f, lo, hi) => Math.log(f / lo) / Math.log(hi / lo) * 100;

// phase bump of the paragraphic EQ, 90 degrees at 1 kHz
const bump = f => 90 / Math.cosh(2.48 * Math.log2(f / 1000));

function line(svg, x1, y1, x2, y2, stroke, width = 1) {
    const el = document.createElementNS(NS, 'line');
    el.setAttribute('x1', x1 + '%');
    el.setAttribute('y1', y1 + '%');
    el.setAttribute('x2', x2 + '%');
    el.setAttribute('y2', y2 + '%');
    el.setAttribute('stroke', stroke);
    el.setAttribute('stroke-width', width);
    svg.append(el);
    return el;
}

// curve lives in a nested svg so it stretches with the plot
function curve(svg, lo, hi, from, toY, stroke, width) {
    const inner = document.createElementNS(NS, 'svg');
    inner.setAttribute('viewBox', '0 0 100 100');
    inner.setAttribute('preserveAspectRatio', 'none');
    const path = document.createElementNS(NS, 'path');
    let d = '';
    for (let i = 0; i <= 600; i++) {
        const f = from * Math.pow(hi / from, i / 600);
        d += (i ? 'L' : 'M') + pos(f, lo, hi) + ' ' + toY(bump(f));
    }
    path.setAttribute('d', d);
    path.setAttribute('fill', 'none');
    path.setAttribute('stroke', stroke);
    path.setAttribute('stroke-width', width);
    path.setAttribute('vector-effect', 'non-scaling-stroke');
    inner.append(path);
    svg.append(inner);
}

function label(parent, text, side, percent, cls) {
    const el = document.createElement('span');
    el.textContent = text;
    el.style[side] = percent + '%';
    if (cls) el.className = cls;
    parent.append(el);
}

const short = f => f >= 1000 ? f / 1000 + 'k' : String(f);

// main graph: 2 Hz - 48 kHz, 130 dB / 936 degrees high
const plot = document.getElementById('plot');
for (let db = 1; db < 130; db++) {
    line(plot, 0, db / 1.3, 100, db / 1.3, db % 10 ? '#1c1c1c' : '#404040');
}
for (let dec = 1; dec <= 10000; dec *= 10) {
    for (let n = 1; n < 10; n++) {
        const f = dec * n;
        if (f <= 2 || f >= 48000) continue;
        const x = pos(f, 2, 48000);
        line(plot, x, 0, x, 100, n === 1 ? '#858585' : '#464646');
        if (f >= 100 && f !== 800) label(document.getElementById('axisFreq'), short(f), 'left', x);
    }
}
label(document.getElementById('axisFreq'), '48kHz', 'left', 100);
line(plot, 0.9, 10 / 1.3, 100, 10 / 1.3, '#7f289a', 2);
curve(plot, 2, 48000, 2.2, v => (360 - v) / 9.36, '#c4c4c4', 2);

for (let i = 0; i <= 10; i++) {
    const db = 10 - i * 5;
    label(document.getElementById('axisDb'), i ? db : '10.0', 'top', i * 5 / 1.3, i ? (i % 2 ? 'minor' : '') : 'limit');
}
for (let i = 0; i <= 26; i++) {
    label(document.getElementById('axisDeg'), 360 - i * 36, 'top', i / 0.26, i ? (i % 2 ? 'minor' : '') : 'limit');
}

// rePhase graph, visible part starts at 84.4 Hz
const mini = document.getElementById('mini');
const LO = 84.4, HI = 30000;
for (let dec = 10; dec <= 10000; dec *= 10) {
    for (let n = 1; n < 10; n++) {
        const f = dec * n;
        if (f > LO && f < HI) line(mini, pos(f, LO, HI), 0, pos(f, LO, HI), 100, '#d0d0d0');
    }
}
for (let deg = 180; deg >= -180; deg -= 45) {
    const y = (180 - deg) / 3.6;
    line(mini, 0, y, 100, y, '#cfcfcf');
    label(document.getElementById('miniDeg'), deg + '°', 'top', y);
}
line(mini, 0, 12.5, 100, 12.5, '#f0a0a0', 3);
line(mini, 0, 12.5, 100, 12.5, '#a81818', 1.5);
line(mini, 0, 50, 100, 50, '#111').setAttribute('stroke-dasharray', '3 2');
curve(mini, LO, HI, LO, v => (180 - v) / 3.6, '#5f4488', 1);
[100, 200, 500, 1000, 2000, 5000, 10000, 20000].forEach(f => {
    label(document.getElementById('miniHz'), short(f) + 'Hz', 'left', pos(f, LO, HI));
});

// slider bank
const bank = document.getElementById('sliders');
[0, 90, 0, 0, 0, 0, 0, 0, 0].forEach((v, i) => {
    let ticks = '';
    for (let t = 0; t <= 20; t++) {
        const y = 15.5 + t * 7.5;
        ticks += t % 10 ? `M3 ${y}h8M17 ${y}h8` : `M0 ${y}h28`;
    }
    bank.insertAdjacentHTML('beforeend', `
        <div class="slider">
            <svg viewBox="0 0 28 180"><path d="${ticks}" stroke="#777"/><path d="M14 10v161" stroke="#333" stroke-width="3"/></svg>
            <input type="range" min="-90" max="90" value="${v}" aria-label="Band ${i + 1} phase">
            <input class="value" value="${v ? '+90.00' : '0.00'}" aria-label="Band ${i + 1} value">
        </div>`);
});
```
